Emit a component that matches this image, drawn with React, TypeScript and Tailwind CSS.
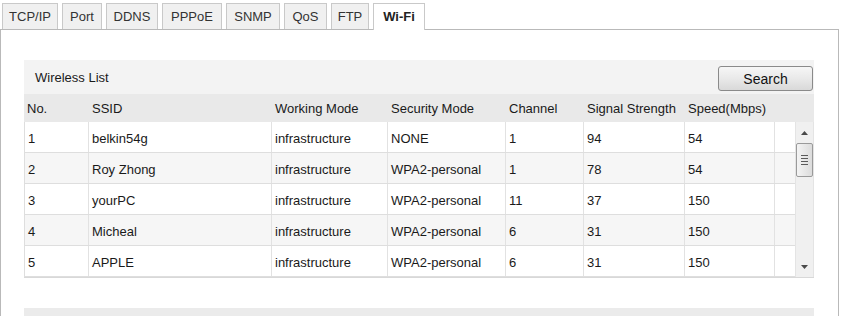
import React from "react";

const tabs = [
    { name: "TCP/IP", w: "w-[56px]" },
    { name: "Port", w: "w-[40px]" },
    { name: "DDNS", w: "w-[52px]" },
    { name: "PPPoE", w: "w-[60px]" },
    { name: "SNMP", w: "w-[54px]" },
    { name: "QoS", w: "w-[43px]" },
    { name: "FTP", w: "w-[38px]" },
];

const cols = ["w-[65px]", "w-[183px]", "w-[116px]", "w-[118px]", "w-[78px]", "w-[101px]", "w-[90px]", "w-[20px]"];
const heads = ["No.", "SSID", "Working Mode", "Security Mode", "Channel", "Signal Strength", "Speed(Mbps)", ""];

const rows = [
    ["1", "belkin54g", "infrastructure", "NONE", "1", "94", "54"],
    ["2", "Roy Zhong", "infrastructure", "WPA2-personal", "1", "78", "54"],
    ["3", "yourPC", "infrastructure", "WPA2-personal", "11", "37", "150"],
    ["4", "Micheal", "infrastructure", "WPA2-personal", "6", "31", "150"],
    ["5", "APPLE", "infrastructure", "WPA2-personal", "6", "31", "150"],
];

export default function App() {
    return (
        <div className="w-[847px] h-[316px] overflow-hidden bg-white text-[13px] text-[#1a1a1a] font-['Liberation_Sans',Arial,sans-serif]">
            {/* tabs */}
            <div className="flex gap-[4px] pl-[2px] pt-[3px] h-[29px] items-start">
                {tabs.map(t => (
                    <div key={t.name} className={`${t.w} h-[26px] flex items-center justify-center bg-[#f0f0f0] border border-b-0 border-[#c9c9c9] text-[#333]`}>
                        {t.name}
                    </div>
                ))}
                <div className="w-[52px] h-[27px] relative z-10 flex items-center justify-center bg-white border border-b-0 border-[#c9c9c9] font-bold text-[#222]">
                    Wi-Fi
                </div>
            </div>

            {/* panel */}
            <div className="w-[839px] h-[287px] border-t border-l border-r border-[#b9b9b9] pl-[23px] pt-[30px]">
                <div className="w-[790px]">
                    <div className="h-[34px] bg-[#f3f3f3] flex items-center justify-between pl-[11px] pr-[1px]">
                        <span className="mt-[1px]">Wireless List</span>
                        <button className="w-[95px] h-[25px] mt-[3px] rounded-[3px] border border-[#8a8a8a] bg-gradient-to-b from-[#f6f6f6] via-[#e9e9e9] to-[#d9d9d9] text-[14px] text-[#111] pt-[2px]">
                            Search
                        </button>
                    </div>
                    <div className="h-[28px] bg-[#e9e9e9] flex items-center">
                        {heads.map((h, i) => (
                            <div key={i} className={`${cols[i]} pl-[3px] pt-[2px]`}>{h}</div>
                        ))}
                    </div>
                    <div className="flex border-b border-[#d8d8d8]">
                        <div className="border-l border-[#dedede]">
                            {rows.map((r, ri) => (
                                <div key={ri} className={`flex h-[31px] border-b border-[#dedede] ${ri % 2 === 1 ? "bg-[#f6f6f6]" : "bg-white"}`}>
                                    {r.concat([""]).map((c, ci) => (
                                        <div key={ci} className={`${ci === 0 ? "w-[64px]" : cols[ci]} ${ci < 7 ? "border-r border-[#e2e2e2]" : ""} pl-[3px] pt-[3px] flex items-center`}>
                                            {c}
                                        </div>
                                    ))}
                                </div>
                            ))}
                        </div>
                        <div className="w-[18px] h-[155px] bg-[#f0f0f0] border-l border-[#e4e4e4] flex flex-col items-center">
                            <svg width="7" height="4" viewBox="0 0 7 4" className="mt-[9px]">
                                <path d="M3.5 0 L7 4 L0 4 Z" fill="#4a4a4a" />
                            </svg>
                            <div className="mt-[8px] w-[17px] h-[34px] rounded-[2px] border border-[#9a9a9a] bg-gradient-to-r from-[#f4f4f4] to-[#dcdcdc] flex flex-col items-center justify-center gap-[2px]">
                                <div className="w-[7px] h-px bg-[#5a5a5a]" />
                                <div className="w-[7px] h-px bg-[#5a5a5a]" />
                                <div className="w-[7px] h-px bg-[#5a5a5a]" />
                                <div className="w-[7px] h-px bg-[#5a5a5a]" />
                            </div>
                            <svg width="7" height="4" viewBox="0 0 7 4" className="mt-auto mb-[8px]">
                                <path d="M0 0 L7 0 L3.5 4 Z" fill="#4a4a4a" />
                            </svg>
                        </div>
                        <div className="w-px bg-[#e4e4e4]" />
                    </div>
                    <div className="mt-[30px] h-[20px] bg-[#ebebeb]" />
                </div>
            </div>
        </div>
    );
}
